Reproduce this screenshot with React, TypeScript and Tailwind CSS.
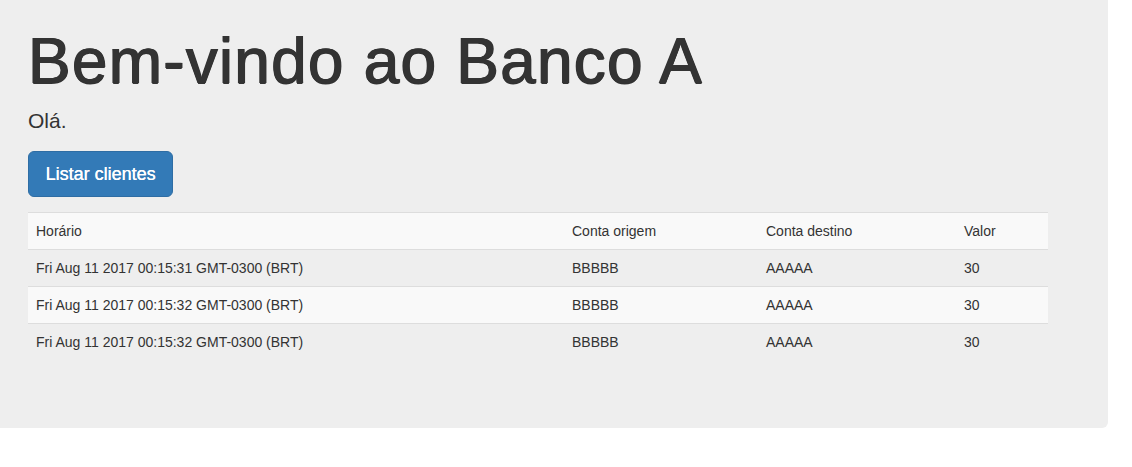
const rows = [
  { time: 'Fri Aug 11 2017 00:15:31 GMT-0300 (BRT)', from: 'BBBBB', to: 'AAAAA', value: '30' },
  { time: 'Fri Aug 11 2017 00:15:32 GMT-0300 (BRT)', from: 'BBBBB', to: 'AAAAA', value: '30' },
  { time: 'Fri Aug 11 2017 00:15:32 GMT-0300 (BRT)', from: 'BBBBB', to: 'AAAAA', value: '30' },
]

export default function App() {
  return (
    <div className="min-h-[467px] bg-white font-['Liberation_Sans',Arial,sans-serif] text-[#333]">
      <div className="w-[1108px] rounded-br-[6px] bg-[#eeeeee] pt-[27px] pb-[48px] pl-[28px]">
        <h1 className="mb-[10px] text-[64px] leading-[69px] font-normal tracking-[1.2px] [text-shadow:0.7px_0_0_#333,-0.7px_0_0_#333,0_0.5px_0_#333]">
          Bem-vindo ao Banco A
        </h1>
        <p className="mb-[15px] text-[21px] leading-[30px] font-light">Olá.</p>
        <p className="mb-[15px]">
          <button className="h-[46px] w-[145px] rounded-[6px] border border-[#2e6da4] bg-[#337ab7] text-[18px] leading-[24px] text-white [text-shadow:0.3px_0_0_#fff]">
            Listar clientes
          </button>
        </p>
        <table className="mb-[20px] w-[1020px] border-collapse text-[14px] leading-[20px]">
          <tbody>
            <tr className="bg-[#f9f9f9]">
              <td className="w-[536px] border-t border-[#dddddd] p-[8px]">Horário</td>
              <td className="w-[194px] border-t border-[#dddddd] p-[8px]">Conta origem</td>
              <td className="w-[198px] border-t border-[#dddddd] p-[8px]">Conta destino</td>
              <td className="border-t border-[#dddddd] p-[8px]">Valor</td>
            </tr>
            {rows.map((r, i) => (
              <tr key={i} className={i % 2 === 1 ? 'bg-[#f9f9f9]' : ''}>
                <td className="border-t border-[#dddddd] p-[8px]">{r.time}</td>
                <td className="border-t border-[#dddddd] p-[8px]">{r.from}</td>
                <td className="border-t border-[#dddddd] p-[8px]">{r.to}</td>
                <td className="border-t border-[#dddddd] p-[8px]">{r.value}</td>
              </tr>
            ))}
          </tbody>
        </table>
      </div>
    </div>
  )
}
